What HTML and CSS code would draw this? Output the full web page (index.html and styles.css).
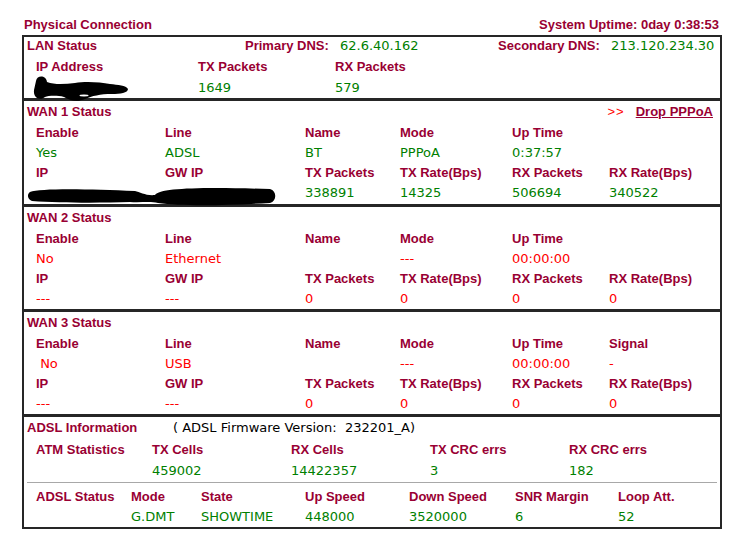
FILE: index.html
```html
<!DOCTYPE html>
<html>
<head>
<meta charset="utf-8">
<title>Physical Connection</title>
<link rel="stylesheet" href="styles.css">
</head>
<body>
<div class="page">
  <div class="titlebar">
    <span class="title">Physical Connection</span>
    <span class="title">System Uptime: 0day 0:38:53</span>
  </div>
  <div class="box">
    <section class="sec lan">
      <div class="lan-head">
        <span class="h">LAN Status</span>
        <span class="h">Primary DNS:</span>
        <span class="v g">62.6.40.162</span>
        <span class="h">Secondary DNS:</span>
        <span class="v g">213.120.234.30</span>
      </div>
      <div class="grid lan-grid">
        <span class="h">IP Address</span>
        <span class="h">TX Packets</span>
        <span class="h">RX Packets</span>
        <span class="v g redact-cell">
          <svg class="blob blob-lan" width="100" height="30" viewBox="30 72 100 30">
            <path d="M36,79 C37,73 46,73 47,80 C55,83 65,82 75,81 C85,79 100,80 110,82 C118,83 126,83 128,87 C128,91 120,92 112,92 C100,92 92,94 85,97 C78,100 70,99 64,95 C56,93 48,94 45,95 C40,99 33,96 34,88 Z" fill="#000"/>
            <ellipse cx="84" cy="93.5" rx="4.5" ry="0.9" fill="#fff"/>
          </svg>
        </span>
        <span class="v g">1649</span>
        <span class="v g">579</span>
      </div>
    </section>

    <section class="sec wan wan1">
      <div class="wan-head">
        <span class="h">WAN 1 Status</span>
        <span class="drop"><span class="arrows">&gt;&gt;</span><a class="link" href="#">Drop PPPoA</a></span>
      </div>
      <div class="grid wan-grid">
        <span class="h">Enable</span><span class="h">Line</span><span class="h">Name</span><span class="h">Mode</span><span class="h">Up Time</span><span class="h"></span>
        <span class="v g">Yes</span><span class="v g">ADSL</span><span class="v g">BT</span><span class="v g">PPPoA</span><span class="v g">0:37:57</span><span class="v"></span>
        <span class="h">IP</span><span class="h">GW IP</span><span class="h">TX Packets</span><span class="h">TX Rate(Bps)</span><span class="h">RX Packets</span><span class="h">RX Rate(Bps)</span>
        <span class="v g redact-cell">
          <svg class="blob blob-wan" width="250" height="22" viewBox="27 186 250 22">
            <path d="M30,192 C40,188 90,189 135,191 C140,192 146,196 155,195 C160,188 200,187 270,189 C277,191 277,201 270,203 C220,206 180,206 158,203 C150,201 140,203 130,202 C100,203 60,203 32,201 C27,199 27,194 30,192 Z" fill="#000"/>
          </svg>
        </span>
        <span class="v g"></span><span class="v g">338891</span><span class="v g">14325</span><span class="v g">506694</span><span class="v g">340522</span>
      </div>
    </section>

    <section class="sec wan">
      <div class="wan-head"><span class="h">WAN 2 Status</span></div>
      <div class="grid wan-grid">
        <span class="h">Enable</span><span class="h">Line</span><span class="h">Name</span><span class="h">Mode</span><span class="h">Up Time</span><span class="h"></span>
        <span class="v r">No</span><span class="v r">Ethernet</span><span class="v r"></span><span class="v r">---</span><span class="v r">00:00:00</span><span class="v"></span>
        <span class="h">IP</span><span class="h">GW IP</span><span class="h">TX Packets</span><span class="h">TX Rate(Bps)</span><span class="h">RX Packets</span><span class="h">RX Rate(Bps)</span>
        <span class="v r">---</span><span class="v r">---</span><span class="v r">0</span><span class="v r">0</span><span class="v r">0</span><span class="v r">0</span>
      </div>
    </section>

    <section class="sec wan">
      <div class="wan-head"><span class="h">WAN 3 Status</span></div>
      <div class="grid wan-grid">
        <span class="h">Enable</span><span class="h">Line</span><span class="h">Name</span><span class="h">Mode</span><span class="h">Up Time</span><span class="h">Signal</span>
        <span class="v r">&nbsp;No</span><span class="v r">USB</span><span class="v r"></span><span class="v r">---</span><span class="v r">00:00:00</span><span class="v r">-</span>
        <span class="h">IP</span><span class="h">GW IP</span><span class="h">TX Packets</span><span class="h">TX Rate(Bps)</span><span class="h">RX Packets</span><span class="h">RX Rate(Bps)</span>
        <span class="v r">---</span><span class="v r">---</span><span class="v r">0</span><span class="v r">0</span><span class="v r">0</span><span class="v r">0</span>
      </div>
    </section>

    <section class="sec adsl">
      <div class="adsl-head">
        <span class="h">ADSL Information</span>
        <span class="v k">( ADSL Firmware Version:&nbsp; 232201_A)</span>
      </div>
      <div class="grid atm-grid">
        <span class="h">ATM Statistics</span><span class="h">TX Cells</span><span class="h">RX Cells</span><span class="h">TX CRC errs</span><span class="h">RX CRC errs</span>
        <span class="v"></span><span class="v g">459002</span><span class="v g">14422357</span><span class="v g">3</span><span class="v g">182</span>
      </div>
      <div class="rule"></div>
      <div class="grid status-grid">
        <span class="h">ADSL Status</span><span class="h">Mode</span><span class="h">State</span><span class="h">Up Speed</span><span class="h">Down Speed</span><span class="h">SNR Margin</span><span class="h">Loop Att.</span>
        <span class="v"></span><span class="v g">G.DMT</span><span class="v g">SHOWTIME</span><span class="v g">448000</span><span class="v g">3520000</span><span class="v g">6</span><span class="v g">52</span>
      </div>
    </section>
  </div>
</div>
</body>
</html>
```

FILE: styles.css
```css
* { box-sizing: border-box; }

body {
  margin: 0;
  background: #fff;
  font-family: "Liberation Sans", Arial, sans-serif;
  font-size: 13px;
}

.page {
  margin-left: 22px;
  width: 700px;
}

.titlebar {
  display: flex;
  justify-content: space-between;
  margin-top: 17px;
  margin-bottom: 2px;
  padding: 0 3px 0 2px;
  line-height: 16px;
}

.title,
.h {
  font-family: "Liberation Sans", Arial, sans-serif;
  font-weight: bold;
  font-size: 13px;
  color: #990033;
  white-space: nowrap;
}

.v {
  font-family: "DejaVu Sans", Verdana, sans-serif;
  font-size: 13px;
  white-space: nowrap;
}

.g { color: #008000; }
.r { color: #ff0000; }
.k { color: #000; }

.box {
  border: 2px solid #262626;
}

.sec + .sec {
  border-top: 3px solid #262626;
}

/* LAN */
.lan-head {
  display: grid;
  grid-template-columns: 218px 95px 158px 113px auto;
  padding-left: 3px;
  line-height: 18px;
  margin-bottom: 2px;
}

.grid {
  display: grid;
  padding-left: 12px;
}

.lan-grid {
  grid-template-columns: 162px 137px 1fr;
  line-height: 20.5px;
}

.redact-cell {
  position: relative;
}

.blob {
  position: absolute;
  display: block;
}

.blob-lan {
  left: -6px;
  top: -4px;
}

.blob-wan {
  left: -9px;
  top: 3px;
}

/* WAN */
.wan-head {
  display: flex;
  justify-content: space-between;
  align-items: baseline;
  padding: 0 7px 0 3px;
  line-height: 22px;
}

.drop {
  display: flex;
  align-items: baseline;
  gap: 11px;
}

.arrows {
  font-family: "Liberation Sans", Arial, sans-serif;
  font-size: 13px;
  color: #ff0000;
  letter-spacing: 1px;
}

.link {
  font-family: "Liberation Sans", Arial, sans-serif;
  font-weight: bold;
  font-size: 13px;
  color: #990033;
  text-decoration: underline;
}

.wan-grid {
  grid-template-columns: 129px 140px 95px 112px 97px 1fr;
  line-height: 20px;
}

.wan1 {
  padding-bottom: 1px;
}

/* ADSL */
.adsl-head {
  display: grid;
  grid-template-columns: 146px auto;
  padding-left: 3px;
  line-height: 22px;
}

.atm-grid {
  grid-template-columns: 116px 139px 139px 139px 1fr;
  line-height: 21px;
}

.rule {
  margin: 1px 3px 4px 3px;
  border-top: 1px solid #a8a8a8;
}

.status-grid {
  grid-template-columns: 95px 70px 104px 104px 106px 103px 1fr;
  line-height: 20px;
}
```
